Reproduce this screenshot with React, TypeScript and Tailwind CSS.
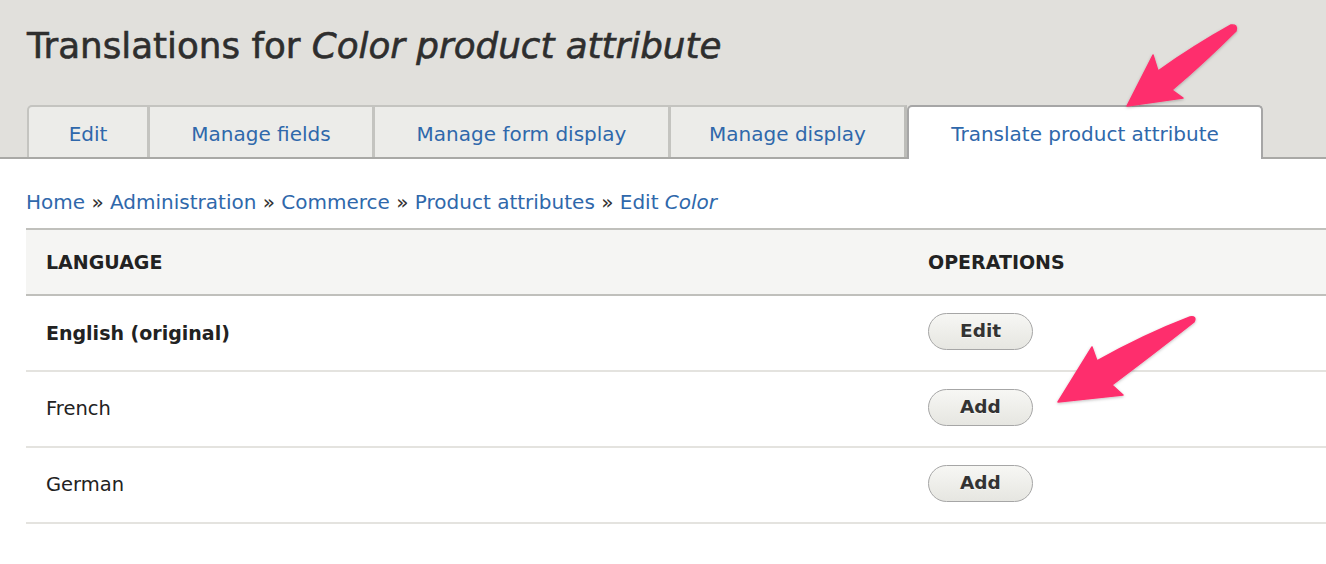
const tabs = [
  { name: "Edit", width: "w-[123px]", active: false },
  { name: "Manage fields", width: "w-[225px]", active: false },
  { name: "Manage form display", width: "w-[296px]", active: false },
  { name: "Manage display", width: "w-[236px]", active: false },
  { name: "Translate product attribute", width: "w-[356px]", active: true },
];

const rows = [
  { lang: "English (original)", op: "Edit", original: true },
  { lang: "French", op: "Add", original: false },
  { lang: "German", op: "Add", original: false },
];

const crumbs = ["Home", "Administration", "Commerce", "Product attributes"];

function Arrows() {
  // pink annotation arrows drawn over the page
  return (
    <svg
      className="pointer-events-none absolute left-0 top-0"
      width="1326"
      height="564"
      viewBox="0 0 1326 564"
    >
      <defs>
        <filter id="shadow" x="-20%" y="-20%" width="140%" height="140%">
          <feDropShadow dx="0" dy="1" stdDeviation="1.5" floodColor="#000" floodOpacity="0.25" />
        </filter>
      </defs>
      <g fill="#fe2f6d" stroke="#fe2f6d" strokeWidth="1.5" strokeLinejoin="round" filter="url(#shadow)">
        <path d="M1127 106 L1153 55 L1158 71 Q1195 45 1231 25 Q1238 24 1236 31 Q1205 62 1172 90 L1183 98 Z" />
        <path d="M1058 402 L1092 347 L1097 361 Q1143 335 1190 317 Q1197 316 1194 322 Q1152 355 1112 385 L1123 395 Z" />
      </g>
    </svg>
  );
}

export default function App() {
  return (
    <div
      className="relative h-[564px] w-[1326px] overflow-hidden bg-white text-[#333]"
      style={{ fontFamily: '"DejaVu Sans", Verdana, sans-serif' }}
    >
      {/* Header */}
      <div className="border-b-2 border-[#a9a9a6] bg-[#e1e0dc] pl-[27px]">
        <h1 className="pt-[25px] text-[35.7px] font-normal leading-[42px] text-[#2e2e2e] [-webkit-text-stroke:0.6px_#2e2e2e]">
          Translations for <em className="italic">Color product attribute</em>
        </h1>
        <nav className="-mb-[2px] mt-[38px] flex items-start">
          {tabs.map((tab, i) =>
            tab.active ? (
              <a
                key={tab.name}
                className={`flex h-[54px] items-center justify-center rounded-t-[5px] border-2 border-b-0 border-[#a6a6a6] bg-white pt-[2px] text-[20px] text-[#2f68ab] ${tab.width}`}
              >
                {tab.name}
              </a>
            ) : (
              <a
                key={tab.name}
                className={`flex h-[52px] items-center justify-center border-t-2 border-r-[3px] border-[#c4c4c0] bg-[#ecece9] pt-[3px] text-[20px] text-[#2f68ab] ${tab.width} ${
                  i === 0 ? "rounded-tl-[5px] border-l-2" : ""
                } ${i === 3 ? "border-r-2 border-r-[#bdbdb9]" : ""}`}
              >
                {tab.name}
              </a>
            )
          )}
        </nav>
      </div>

      {/* Content */}
      <div className="pl-[26px]">
        <div className="mt-[31px] text-[20px] leading-[24px] text-[#333]">
          {crumbs.map((c) => (
            <span key={c}>
              <a className="text-[#2f68ab]">{c}</a> »{" "}
            </span>
          ))}
          <a className="text-[#2f68ab]">
            Edit <em className="italic">Color</em>
          </a>
        </div>

        <div className="mt-[14px]">
          <div className="grid h-[68px] grid-cols-[882px_1fr] items-center border-y-2 border-[#c0c0bc] bg-[#f5f5f3] text-[19px] font-bold uppercase text-[#222]">
            <div className="pl-[20px]">Language</div>
            <div className="pl-[20px]">Operations</div>
          </div>
          {rows.map((r) => (
            <div
              key={r.lang}
              className="grid h-[76px] grid-cols-[882px_1fr] items-center border-b-2 border-[#e4e3df]"
            >
              <div
                className={`pl-[20px] text-[#222] ${
                  r.original ? "text-[19px] font-bold" : "text-[19.5px]"
                }`}
              >
                {r.lang}
              </div>
              <div className="-mt-[4px] pl-[20px]">
                <button className="h-[37px] rounded-full border-[1.5px] border-[#a6a6a6] bg-gradient-to-b from-[#f7f7f4] to-[#e6e6e1] px-[31px] text-[18.5px] font-bold text-[#333] [text-shadow:0_1px_0_rgba(255,255,255,0.6)]">
                  {r.op}
                </button>
              </div>
            </div>
          ))}
        </div>
      </div>

      <Arrows />
    </div>
  );
}
